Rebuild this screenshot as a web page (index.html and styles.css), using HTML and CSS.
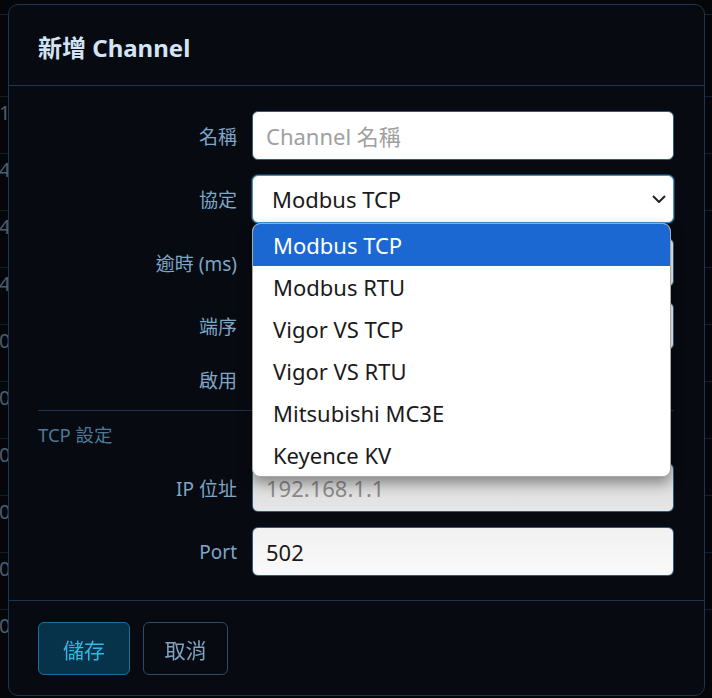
FILE: index.html
```html
<!DOCTYPE html>
<html lang="zh-Hant">
<head>
  <meta charset="UTF-8" />
  <meta name="viewport" content="width=device-width, initial-scale=1.0" />
  <title>新增 Channel</title>
  <link rel="stylesheet" href="styles.css">
</head>
<body>
  <div class="page">
    <div class="bg-head"></div>
    <div class="bg-table">
      <div class="bg-row"><span>1</span></div>
      <div class="bg-row"><span>4</span></div>
      <div class="bg-row"><span>4</span></div>
      <div class="bg-row"><span>4</span></div>
      <div class="bg-row"><span>0</span></div>
      <div class="bg-row"><span>0</span></div>
      <div class="bg-row"><span>0</span></div>
      <div class="bg-row"><span>0</span></div>
      <div class="bg-row"><span>0</span></div>
      <div class="bg-row"><span>0</span></div>
    </div>
  </div>

  <div class="modal">
    <div class="modal-header">
      <h2>新增 Channel</h2>
    </div>

    <div class="modal-body">
      <div class="form-grid">
        <label>名稱</label>
        <input type="text" class="field" placeholder="Channel 名稱">

        <label>協定</label>
        <div class="select-wrap">
          <div class="select focused">
            <span>Modbus TCP</span>
            <svg class="chevron" width="14" height="8" viewBox="0 0 14 8"><polyline points="1,1 7,7 13,1" /></svg>
          </div>
          <ul class="dropdown">
            <li class="active">Modbus TCP</li>
            <li>Modbus RTU</li>
            <li>Vigor VS TCP</li>
            <li>Vigor VS RTU</li>
            <li>Mitsubishi MC3E</li>
            <li>Keyence KV</li>
          </ul>
        </div>

        <label>逾時 (ms)</label>
        <input type="text" class="field">

        <label>端序</label>
        <div class="select">
          <span></span>
          <svg class="chevron" width="14" height="8" viewBox="0 0 14 8"><polyline points="1,1 7,7 13,1" /></svg>
        </div>

        <label>啟用</label>
        <div class="check-row"><span class="check"></span></div>
      </div>

      <hr class="divider">
      <h6 class="section-title">TCP 設定</h6>

      <div class="form-grid">
        <label>IP 位址</label>
        <input type="text" class="field field-ip" value="192.168.1.1">

        <label>Port</label>
        <input type="text" class="field field-port" value="502">
      </div>
    </div>

    <div class="modal-footer">
      <button class="btn btn-save">儲存</button>
      <button class="btn btn-cancel">取消</button>
    </div>
  </div>
</body>
</html>
```

FILE: styles.css
```css
body {
  margin: 0;
  padding: 0;
  background-color: #04060a;
  font-family: "Noto Sans", "Noto Sans CJK TC", sans-serif;
  color: #d6e6f5;
  overflow: hidden;
}

/* page behind the modal */
.page {
  height: 698px;
}
.bg-head {
  height: 14px;
  border-bottom: 1px solid #182232;
}
.bg-table {
  margin-top: 81px;
}
.bg-row {
  height: 57px;
  border-top: 1px solid #141d2a;
  display: flex;
  align-items: flex-start;
  padding-top: 6px;
  box-sizing: border-box;
}
.bg-row span {
  margin-left: -1px;
  font-size: 20px;
  line-height: 20px;
  color: #4e5d6e;
}

/* modal */
.modal {
  position: fixed;
  left: 8px;
  top: 4px;
  width: 697px;
  height: 692px;
  box-sizing: border-box;
  background-color: #070a10;
  border: 1px solid #1f3450;
  border-radius: 10px;
  display: flex;
  flex-direction: column;
}
.modal-header {
  height: 81px;
  box-sizing: border-box;
  padding: 3px 29px 0;
  display: flex;
  align-items: center;
  border-bottom: 1px solid #1f3450;
}
.modal-header h2 {
  margin: 0;
  font-size: 24px;
  font-weight: bold;
  color: #d3e4f4;
}
.modal-body {
  padding: 25px 30px 24px 29px;
}
.form-grid {
  display: grid;
  grid-template-columns: 199px 1fr;
  column-gap: 15px;
  row-gap: 15px;
  align-items: center;
}
.form-grid label {
  text-align: right;
  font-size: 19px;
  color: #7ea6c8;
}
.field {
  height: 49px;
  box-sizing: border-box;
  width: 100%;
  margin: 0;
  padding: 0 13px;
  border: 1px solid #2f5b80;
  border-radius: 6px;
  background-color: #ffffff;
  font-family: "Noto Sans", "Noto Sans CJK TC", sans-serif;
  font-size: 22px;
  color: #1a1a1a;
}
.field::placeholder {
  color: #a0a0a0;
}
.field-ip {
  background: linear-gradient(#d8d8d8, #e6e6e6);
  color: #8a8a8a;
}
.field-port {
  background: linear-gradient(#f1f1f1, #fafafa);
}

.select-wrap {
  position: relative;
}
.select {
  height: 48px;
  box-sizing: border-box;
  padding: 0 7px 0 19px;
  border: 1px solid #2f5b80;
  border-radius: 6px;
  background-color: #ffffff;
  display: flex;
  align-items: center;
  justify-content: space-between;
  font-size: 22px;
  color: #1a1a1a;
}
.select.focused {
  border-color: #4a8fbf;
  box-shadow: 0 0 0 1px rgba(74, 143, 191, 0.35);
}
.chevron polyline {
  fill: none;
  stroke: #222;
  stroke-width: 2;
}

/* open list of the protocol select */
.dropdown {
  position: absolute;
  z-index: 10;
  top: 48px;
  left: 0;
  right: 3px;
  margin: 0;
  padding: 0;
  list-style: none;
  background-color: #ffffff;
  border: 1px solid #a8a8a8;
  border-radius: 8px;
  overflow: hidden;
  box-shadow: 0 6px 14px rgba(0, 0, 0, 0.4);
}
.dropdown li {
  height: 42px;
  line-height: 42px;
  padding-left: 20px;
  font-size: 22px;
  color: #1a1a1a;
}
.dropdown li.active {
  background-color: #1c68d2;
  color: #ffffff;
}

.check-row {
  height: 30px;
  display: flex;
  align-items: center;
}
.check {
  width: 24px;
  height: 24px;
  border: 1px solid #3d6a8f;
  border-radius: 4px;
  background-color: #0d1520;
}

.divider {
  margin: 15px 0 0;
  border: none;
  border-top: 1px solid #1f3450;
}
.section-title {
  margin: 12px 0 16px;
  font-size: 18.5px;
  line-height: 24px;
  font-weight: normal;
  color: #4d7898;
}

.modal-footer {
  flex: 1;
  border-top: 1px solid #1f3450;
  padding: 21px 29px 0;
  display: flex;
  align-items: flex-start;
  gap: 13px;
}
.btn {
  height: 53px;
  border-radius: 6px;
  font-family: "Noto Sans", "Noto Sans CJK TC", sans-serif;
  font-size: 21px;
  cursor: pointer;
}
.btn-save {
  width: 92px;
  background-color: #07334a;
  border: 1px solid #1c6f9b;
  color: #2fb8e2;
}
.btn-cancel {
  width: 85px;
  background-color: transparent;
  border: 1px solid #2b4d6b;
  color: #7fa2c2;
}
```
